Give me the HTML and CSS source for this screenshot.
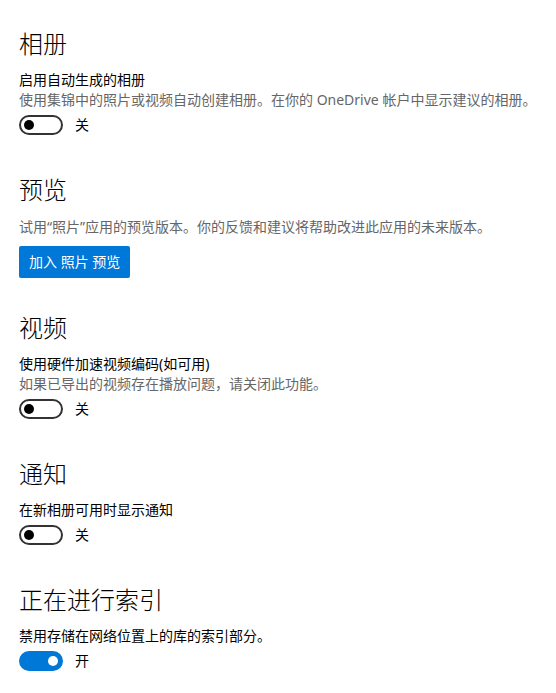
FILE: index.html
```html
<!DOCTYPE html>
<html lang="zh-CN">
<head>
<meta charset="utf-8">
<title>设置</title>
<link rel="stylesheet" href="styles.css">
</head>
<body>
<main class="page">
  <section class="section">
    <h2 class="heading">相册</h2>
    <div class="label">启用自动生成的相册</div>
    <div class="desc">使用集锦中的照片或视频自动创建相册。在你的 OneDrive 帐户中显示建议的相册。</div>
    <div class="toggle-row">
      <span class="toggle"><span class="knob"></span></span>
      <span class="state">关</span>
    </div>
  </section>

  <section class="section">
    <h2 class="heading">预览</h2>
    <div class="desc desc-only">试用“照片”应用的预览版本。你的反馈和建议将帮助改进此应用的未来版本。</div>
    <button class="btn" type="button">加入 照片 预览</button>
  </section>

  <section class="section">
    <h2 class="heading">视频</h2>
    <div class="label">使用硬件加速视频编码(如可用)</div>
    <div class="desc">如果已导出的视频存在播放问题，请关闭此功能。</div>
    <div class="toggle-row">
      <span class="toggle"><span class="knob"></span></span>
      <span class="state">关</span>
    </div>
  </section>

  <section class="section">
    <h2 class="heading">通知</h2>
    <div class="label">在新相册可用时显示通知</div>
    <div class="toggle-row">
      <span class="toggle"><span class="knob"></span></span>
      <span class="state">关</span>
    </div>
  </section>

  <section class="section">
    <h2 class="heading">正在进行索引</h2>
    <div class="label">禁用存储在网络位置上的库的索引部分。</div>
    <div class="toggle-row">
      <span class="toggle on"><span class="knob"></span></span>
      <span class="state">开</span>
    </div>
  </section>
</main>
</body>
</html>
```

FILE: styles.css
```css
html, body {
  margin: 0;
  padding: 0;
  background: #ffffff;
}

body {
  font-family: "Noto Sans", "Noto Sans CJK SC", sans-serif;
  color: #000000;
  font-size: 14px;
}

.page {
  padding: 28px 19px 0 19px;
  display: flex;
  flex-direction: column;
  gap: 34px;
}

.section {
  display: flex;
  flex-direction: column;
  align-items: flex-start;
}

.heading {
  margin: 0;
  font-size: 24px;
  font-weight: 300;
  line-height: 32px;
  color: #000000;
}

.label {
  margin-top: 10px;
  line-height: 20px;
  color: #000000;
  white-space: nowrap;
}

.desc {
  line-height: 20px;
  color: #666666;
  white-space: nowrap;
}

.desc-only {
  margin-top: 11px;
}

.btn {
  margin-top: 9px;
  height: 32px;
  padding: 0 10px;
  border: none;
  border-radius: 2px;
  background: #0078d7;
  color: #ffffff;
  font-family: "Noto Sans", "Noto Sans CJK SC", sans-serif;
  font-size: 14px;
  line-height: 32px;
}

.toggle-row {
  height: 30px;
  display: flex;
  align-items: center;
  gap: 12px;
}

.toggle {
  box-sizing: border-box;
  width: 44px;
  height: 20px;
  border: 2px solid #333333;
  border-radius: 10px;
  display: flex;
  align-items: center;
  padding: 0 3px;
  background: #ffffff;
}

.knob {
  width: 10px;
  height: 10px;
  border-radius: 50%;
  background: #000000;
}

.toggle.on {
  border-color: #0078d7;
  background: #0078d7;
  justify-content: flex-end;
}

.toggle.on .knob {
  background: #ffffff;
}

.state {
  line-height: 20px;
  color: #000000;
}
```
